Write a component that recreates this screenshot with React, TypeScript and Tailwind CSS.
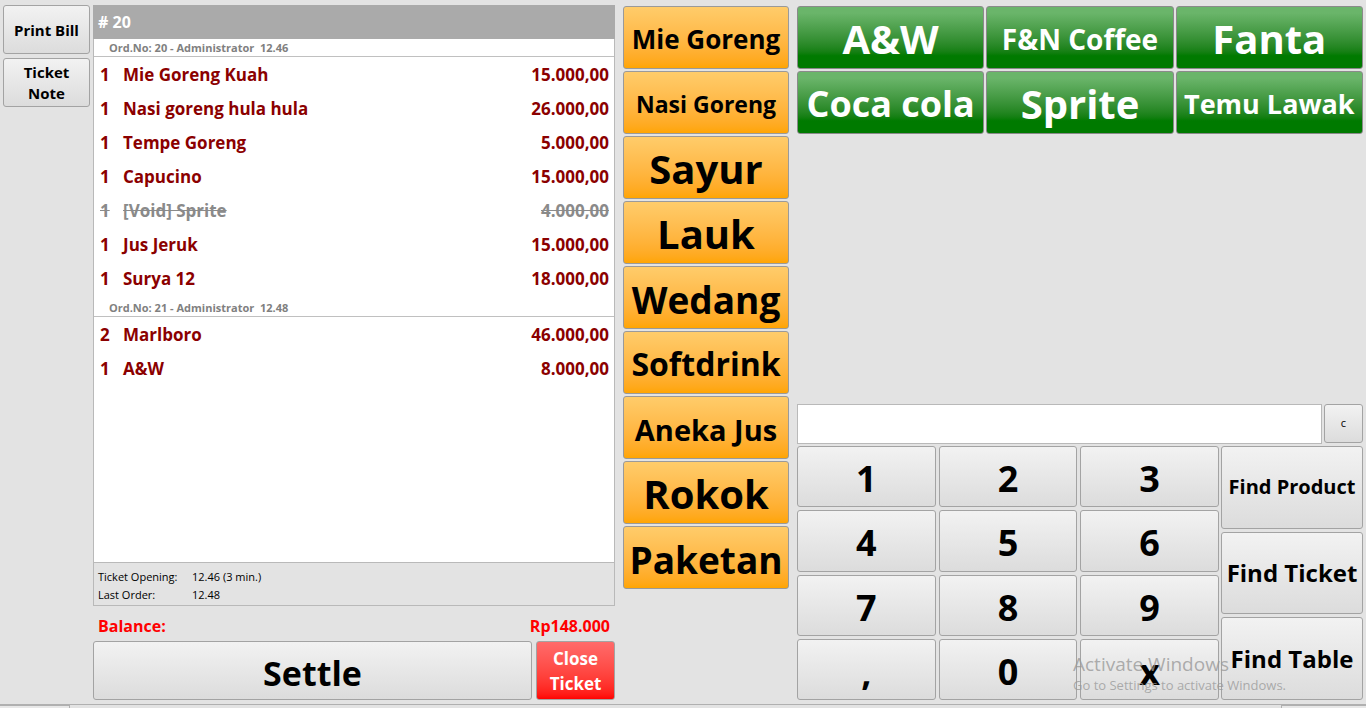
import React from 'react';

type Item = { qty: number; name: string; price: string; void?: boolean };
type Order = { no: number; user: string; time: string; items: Item[] };

const orders: Order[] = [
  {
    no: 20,
    user: 'Administrator',
    time: '12.46',
    items: [
      { qty: 1, name: 'Mie Goreng Kuah', price: '15.000,00' },
      { qty: 1, name: 'Nasi goreng hula hula', price: '26.000,00' },
      { qty: 1, name: 'Tempe Goreng', price: '5.000,00' },
      { qty: 1, name: 'Capucino', price: '15.000,00' },
      { qty: 1, name: '[Void] Sprite', price: '4.000,00', void: true },
      { qty: 1, name: 'Jus Jeruk', price: '15.000,00' },
      { qty: 1, name: 'Surya 12', price: '18.000,00' },
    ],
  },
  {
    no: 21,
    user: 'Administrator',
    time: '12.48',
    items: [
      { qty: 2, name: 'Marlboro', price: '46.000,00' },
      { qty: 1, name: 'A&W', price: '8.000,00' },
    ],
  },
];

const categories = [
  { label: 'Mie Goreng', size: 'text-[26px]' },
  { label: 'Nasi Goreng', size: 'text-[23px]' },
  { label: 'Sayur', size: 'text-[40px]' },
  { label: 'Lauk', size: 'text-[40px]' },
  { label: 'Wedang', size: 'text-[37px]' },
  { label: 'Softdrink', size: 'text-[32px]' },
  { label: 'Aneka Jus', size: 'text-[29px]' },
  { label: 'Rokok', size: 'text-[40px]' },
  { label: 'Paketan', size: 'text-[37px]' },
];

const products = [
  { label: 'A&W', size: 'text-[40px]' },
  { label: 'F&N Coffee', size: 'text-[28px]' },
  { label: 'Fanta', size: 'text-[40px]' },
  { label: 'Coca cola', size: 'text-[36px]' },
  { label: 'Sprite', size: 'text-[40px]' },
  { label: 'Temu Lawak', size: 'text-[27px]' },
];

const keys = ['1', '2', '3', '4', '5', '6', '7', '8', '9', ',', '0', 'x'];

const grayBtn =
  'rounded-[3px] border border-[#a3a3a3] bg-gradient-to-b from-[#f2f2f2] to-[#dcdcdc] text-black font-bold';

export default function App() {
  return (
    <div className="relative w-[1366px] h-[708px] overflow-hidden bg-[#e3e3e3] font-['Open_Sans',sans-serif] select-none">
      <div className="flex h-[704px]">
        {/* left tool buttons */}
        <div className="ml-[3px] mt-[5px] w-[87px] flex flex-col gap-[4px]">
          <button className={`${grayBtn} h-[49px] text-[15px] leading-[18px]`}>Print Bill</button>
          <button className={`${grayBtn} h-[49px] text-[15px] leading-[21px]`}>
            Ticket
            <br />
            Note
          </button>
        </div>

        {/* ticket */}
        <div className="ml-[3px] mt-[5px] w-[522px] flex flex-col">
          <div className="h-[34px] bg-[#aaaaaa] text-white font-bold text-[16px] px-[5px] flex items-center">
            # 20
          </div>
          <div className="h-[523px] bg-white border-x border-[#b9b9b9]">
            {orders.map((o, oi) => (
              <div key={o.no}>
                <div
                  className={`h-[18px] border-b border-[#c0c0c0] pl-[15px] text-[11px] font-bold text-[#808080] leading-[18px] ${
                    oi > 0 ? 'mt-[3px]' : ''
                  }`}
                >
                  Ord.No: {o.no} - {o.user}&nbsp; {o.time}
                </div>
                <div className="pt-[1px]">
                  {o.items.map((it, i) => (
                    <div
                      key={i}
                      className={`h-[34px] flex items-center pl-[6px] pr-[5px] text-[17px] font-bold ${
                        it.void ? 'text-[#8a8a8a] line-through' : 'text-[#8b0000]'
                      }`}
                    >
                      <span className="w-[23px]">{it.qty}</span>
                      <span className="flex-1">{it.name}</span>
                      <span>{it.price}</span>
                    </div>
                  ))}
                </div>
              </div>
            ))}
          </div>
          <div className="h-[44px] border border-[#b9b9b9] bg-[#e3e3e3] px-[4px] pt-[5px] text-[11px] leading-[18px] text-black">
            <div className="flex">
              <span className="w-[94px]">Ticket Opening:</span>
              <span>12.46 (3 min.)</span>
            </div>
            <div className="flex">
              <span className="w-[94px]">Last Order:</span>
              <span>12.48</span>
            </div>
          </div>
          <div className="h-[35px] flex items-center justify-between px-[5px] pt-[4px] text-[16px] font-bold text-[#ff0000]">
            <span>Balance:</span>
            <span>Rp148.000</span>
          </div>
          <div className="flex gap-[4px] h-[59px]">
            <button className={`${grayBtn} flex-1 text-[34px] pt-[5px]`}>Settle</button>
            <button className="w-[79px] rounded-[3px] border border-[#a3a3a3] bg-gradient-to-b from-[#ff6a6a] to-[#ff0000] text-white font-bold text-[17px] leading-[25px]">
              Close
              <br />
              Ticket
            </button>
          </div>
        </div>

        {/* categories */}
        <div className="ml-[8px] mt-[6px] w-[166px] flex flex-col gap-[2px]">
          {categories.map((c) => (
            <button
              key={c.label}
              className={`h-[63px] rounded-[3px] border border-[#9a9a9a] bg-gradient-to-b from-[#ffcc6a] to-[#ffa500] text-black font-bold leading-none pt-[3px] ${c.size}`}
            >
              {c.label}
            </button>
          ))}
        </div>

        {/* right side */}
        <div className="ml-[8px] mt-[6px] mb-[4px] w-[566px] flex flex-col">
          <div className="grid grid-cols-3 gap-[2px]">
            {products.map((p) => (
              <button
                key={p.label}
                className={`h-[63px] rounded-[3px] border border-[#8a8a8a] bg-gradient-to-b from-[#6ab56a] from-10% to-[#007a00] to-80% text-white font-bold leading-none whitespace-nowrap pt-[2px] ${p.size}`}
              >
                {p.label}
              </button>
            ))}
          </div>
          <div className="flex-1" />
          <div className="flex gap-[2px] h-[40px]">
            <div className="flex-1 bg-white border border-[#b9b9b9]" />
            <button className={`${grayBtn} w-[39px] h-[39px] text-[11px] font-normal`}>c</button>
          </div>
          <div className="mt-[2px] flex gap-[2px]">
            <div className="grid grid-cols-3 grid-rows-4 gap-[3px] w-[422px] h-[254px]">
              {keys.map((k) => (
                <button key={k} className={`${grayBtn} text-[36px] leading-none pt-[5px]`}>
                  {k}
                </button>
              ))}
            </div>
            <div className="flex-1 flex flex-col gap-[3px] h-[254px]">
              <button className={`${grayBtn} flex-1 text-[20px]`}>Find Product</button>
              <button className={`${grayBtn} flex-1 text-[24px]`}>Find Ticket</button>
              <button className={`${grayBtn} flex-1 text-[24px]`}>Find Table</button>
            </div>
          </div>
        </div>
      </div>

      {/* bottom status strip */}
      <div className="h-[4px] border-t border-[#b0b0b0] flex justify-between">
        <div className="w-[70px] border-r border-t border-[#b0b0b0] bg-[#e8e8e8]" />
        <div className="w-[85px] border-l border-t border-[#b0b0b0] bg-[#e8e8e8]" />
      </div>

      {/* OS watermark */}
      <div className="absolute left-[1073px] top-[652px] pointer-events-none text-[#9a9a9a]/80">
        <div className="text-[19px] leading-[24px]">Activate Windows</div>
        <div className="text-[13px] leading-[18px]">Go to Settings to activate Windows.</div>
      </div>
    </div>
  );
}
